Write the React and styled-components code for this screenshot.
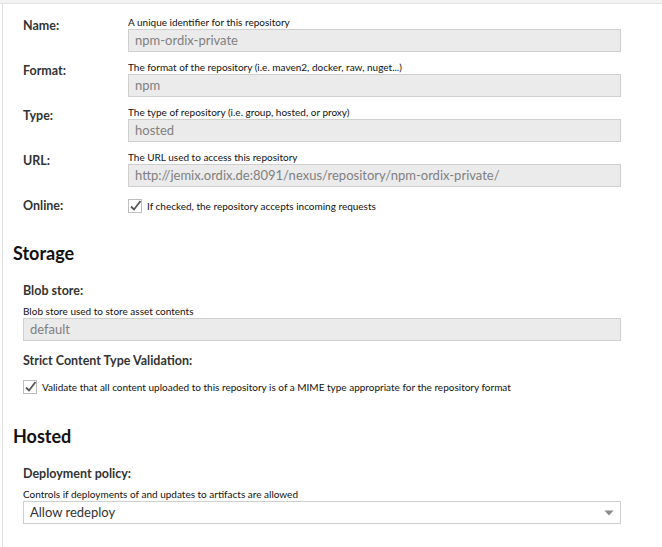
import React from 'react'
import styled, { createGlobalStyle } from 'styled-components'

const GlobalStyle = createGlobalStyle`
    html, body {
        margin: 0;
        padding: 0;
        background: #ffffff;
    }
    body {
        font-family: Lato, "Liberation Sans", Arial, sans-serif;
        color: #222;
    }
`

const TopBand = styled.div`
    height: 3px;
    background: #f3f3f3;
    border-bottom: 1px solid #e2e2e2;
`

const Panel = styled.main`
    margin-left: 2px;
    border-left: 1px solid #e0e0e0;
    min-height: 543px;
    padding: 12px 0 0 10px;
    box-sizing: border-box;
`

const Group = styled.div`
    padding-left: 10px;
    margin-top: ${(p) => p.top || 0}px;
`

const Row = styled.div`
    display: grid;
    grid-template-columns: 105px 493px;
    padding-top: ${(p) => p.top || 0}px;
    margin-bottom: ${(p) => p.gap || 0}px;
`

const Label = styled.div`
    font-weight: 700;
    font-size: 12.5px;
    color: #333;
    padding-top: ${(p) => p.top || 0}px;
`

const FieldLabel = styled.div`
    font-weight: 700;
    font-size: 12.5px;
    color: #333;
    margin-top: ${(p) => p.top || 0}px;
    margin-bottom: ${(p) => p.gap || 8}px;
`

const Help = styled.div`
    font-size: 10px;
    color: #111;
    line-height: 12px;
    margin-bottom: 1px;
`

const Input = styled.div`
    height: 23px;
    box-sizing: border-box;
    border: 1px solid #cfcfcf;
    background: ${(p) => (p.readOnly ? '#ebebeb' : '#ffffff')};
    color: ${(p) => (p.readOnly ? '#808080' : '#333')};
    font-size: 13px;
    line-height: 21px;
    padding: 0 6px;
    display: flex;
    align-items: center;
    justify-content: space-between;
    width: ${(p) => p.width || 493}px;
`

const CheckRow = styled.div`
    display: flex;
    align-items: center;
    gap: 5px;
    font-size: 10px;
    color: #111;
`

const Heading = styled.h2`
    font-size: 18px;
    font-weight: 700;
    color: #111;
    margin: ${(p) => p.top || 0}px 0 0 0;
`

const Check = () => (
    <svg width="14" height="14" viewBox="0 0 14 14">
        <rect x="0.5" y="0.5" width="13" height="13" fill="#fff" stroke="#bdbdbd" />
        <path d="M3 7.5 L6 10.5 L12.5 2" fill="none" stroke="#555" strokeWidth="1.8" />
    </svg>
)

const Arrow = () => (
    <svg width="10" height="6" viewBox="0 0 10 6">
        <path d="M0.5 0.5 L9.5 0.5 L5 5.5 Z" fill="#8a8a8a" />
    </svg>
)

const fields = [
    { label: 'Name:', help: 'A unique identifier for this repository', value: 'npm-ordix-private' },
    { label: 'Format:', help: 'The format of the repository (i.e. maven2, docker, raw, nuget...)', value: 'npm' },
    { label: 'Type:', help: 'The type of repository (i.e. group, hosted, or proxy)', value: 'hosted' },
    { label: 'URL:', help: 'The URL used to access this repository', value: 'http://jemix.ordix.de:8091/nexus/repository/npm-ordix-private/' },
]

const App = () => {
    return (
        <>
            <GlobalStyle />
            <TopBand />
            <Panel>
                <Group>
                    {fields.map((f) => (
                        <Row key={f.label} gap={9}>
                            <Label top={2}>{f.label}</Label>
                            <div>
                                <Help>{f.help}</Help>
                                <Input readOnly>{f.value}</Input>
                            </div>
                        </Row>
                    ))}
                    <Row top={2} gap={29}>
                        <Label>Online:</Label>
                        <CheckRow>
                            <Check />
                            If checked, the repository accepts incoming requests
                        </CheckRow>
                    </Row>
                </Group>

                <Heading>Storage</Heading>

                <Group top={19}>
                    <FieldLabel gap={7}>Blob store:</FieldLabel>
                    <Help>Blob store used to store asset contents</Help>
                    <Input readOnly width={598}>default</Input>
                    <FieldLabel top={12} gap={12}>Strict Content Type Validation:</FieldLabel>
                    <CheckRow>
                        <Check />
                        Validate that all content uploaded to this repository is of a MIME type appropriate for the repository format
                    </CheckRow>
                </Group>

                <Heading top={31}>Hosted</Heading>

                <Group top={19}>
                    <FieldLabel gap={7}>Deployment policy:</FieldLabel>
                    <Help>Controls if deployments of and updates to artifacts are allowed</Help>
                    <Input width={598}>
                        Allow redeploy
                        <Arrow />
                    </Input>
                </Group>
            </Panel>
        </>
    )
}

export default App
